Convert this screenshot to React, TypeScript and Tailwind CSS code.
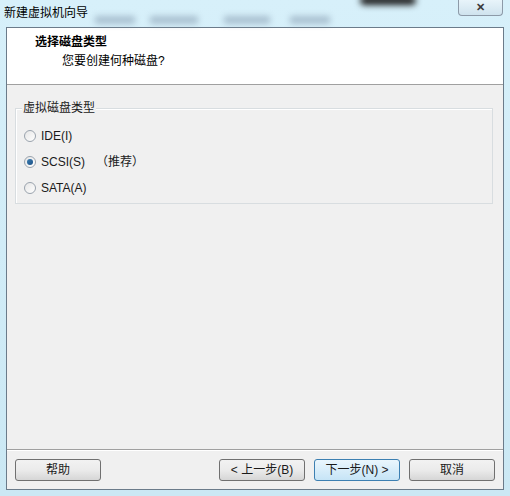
import { useState } from "react";

type Disk = "ide" | "scsi" | "sata";

const font = { fontFamily: '"Liberation Sans", "Noto Sans CJK SC", sans-serif' };

function Radio({ checked, label, extra, onClick }: { checked: boolean; label: string; extra?: string; onClick: () => void }) {
  return (
    <button onClick={onClick} className="flex items-center h-[26px] gap-[5px] text-[12px] text-[#1a1a1a]">
      <span className="w-[12px] h-[12px] rounded-full border border-[#9aa3ad] bg-gradient-to-br from-[#e6e6e6] to-white flex items-center justify-center">
        {checked && <span className="w-[6px] h-[6px] rounded-full bg-gradient-to-br from-[#3c7fb1] to-[#1b4f86]" />}
      </span>
      <span>{label}</span>
      {extra && <span className="ml-[6px]">{extra}</span>}
    </button>
  );
}

function WinButton({ children, focused }: { children: React.ReactNode; focused?: boolean }) {
  return (
    <button
      className={`w-[86px] h-[22px] rounded-[3px] border text-[12px] text-[#1a1a1a] flex items-center justify-center ${
        focused
          ? "border-[#3c7fb1] bg-gradient-to-b from-[#eaf6fd] to-[#c6e4f6]"
          : "border-[#707070] bg-gradient-to-b from-[#f2f2f2] via-[#ebebeb] to-[#d6d6d6]"
      }`}
    >
      {children}
    </button>
  );
}

export default function App() {
  const [disk, setDisk] = useState<Disk>("scsi");

  return (
    <div className="w-[510px] h-[496px] bg-gradient-to-b from-[#d7f0fa] to-[#cbe8f4] relative overflow-hidden flex flex-col" style={font}>
      {/* blurred glass behind title */}
      <div className="absolute left-[95px] top-[16px] w-[40px] h-[8px] bg-[#8aa0b4] blur-[3px] opacity-60" />
      <div className="absolute left-[150px] top-[16px] w-[48px] h-[8px] bg-[#8aa0b4] blur-[3px] opacity-60" />
      <div className="absolute left-[224px] top-[16px] w-[46px] h-[8px] bg-[#8aa0b4] blur-[3px] opacity-60" />
      <div className="absolute left-[290px] top-[16px] w-[40px] h-[8px] bg-[#8aa0b4] blur-[3px] opacity-60" />
      <div className="absolute left-[360px] top-[-4px] w-[56px] h-[9px] bg-[#1e1e1e] blur-[3px] rounded-full" />

      {/* title bar */}
      <div className="h-[27px] flex items-start justify-between relative">
        <span className="text-[12px] text-black ml-[4px] mt-[4px]">新建虚拟机向导</span>
        <button className="w-[45px] h-[16px] mr-[7px] rounded-b-[4px] border border-t-0 border-[#8d9aa8] bg-gradient-to-b from-[#e8f4fa] to-[#cfe3ee] flex items-center justify-center text-[11px] text-[#3a3a3a] font-bold">
          ✕
        </button>
      </div>

      {/* window client */}
      <div className="mx-[6px] h-[463px] border border-[#6b7b8a] bg-[#f0f0f0] flex flex-col">
        <div className="h-[57px] bg-white border-b border-[#a0a0a0] pl-[28px] pt-[6px]">
          <div className="text-[12px] font-bold text-black leading-[16px]">选择磁盘类型</div>
          <div className="text-[12px] text-black leading-[16px] ml-[27px] mt-[3px]">您要创建何种磁盘?</div>
        </div>

        <div className="flex-1 px-[8px] pt-[23px]">
          <div className="relative border border-[#d8dde0] shadow-[inset_1px_1px_0_#ffffff] h-[96px] pl-[8px] pt-[14px] mr-[2px]">
            <span className="absolute left-[6px] top-[-9px] bg-[#f0f0f0] px-[1px] text-[12px] text-[#1a1a1a] leading-[16px]">虚拟磁盘类型</span>
            <Radio checked={disk === "ide"} label="IDE(I)" onClick={() => setDisk("ide")} />
            <Radio checked={disk === "scsi"} label="SCSI(S)" extra="（推荐）" onClick={() => setDisk("scsi")} />
            <Radio checked={disk === "sata"} label="SATA(A)" onClick={() => setDisk("sata")} />
          </div>
        </div>

        <div className="h-[40px] border-t border-[#a0a0a0] shadow-[inset_0_1px_0_#ffffff] flex items-start px-[8px] pt-[9px]">
          <WinButton>帮助</WinButton>
          <div className="flex-1" />
          <div className="flex gap-[9px]">
            <WinButton>&lt; 上一步(B)</WinButton>
            <WinButton focused>下一步(N) &gt;</WinButton>
            <WinButton>取消</WinButton>
          </div>
        </div>
      </div>
    </div>
  );
}
